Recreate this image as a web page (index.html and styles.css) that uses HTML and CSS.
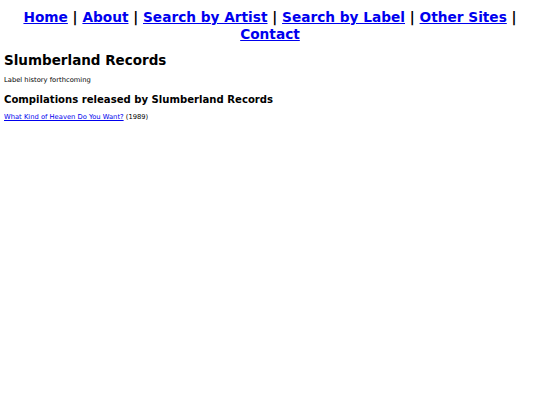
FILE: index.html
```html
<!DOCTYPE html>
<html>
<head>
<meta charset="utf-8">
<link rel="stylesheet" href="styles.css">
<title>Slumberland Records</title>
</head>
<body>
<div class="nav"><a href="#">Home</a> | <a href="#">About</a> | <a href="#">Search by Artist</a> | <a href="#">Search by Label</a> | <a href="#">Other Sites</a> | <a href="#">Contact</a></div>
<h1>Slumberland Records</h1>
<p>Label history forthcoming</p>
<h2>Compilations released by Slumberland Records</h2>
<p><a href="#">What Kind of Heaven Do You Want?</a> (1989)</p>
</body>
</html>
```
FILE: styles.css
```css
body {
  margin: 4px;
  font-family: "DejaVu Sans", Verdana, sans-serif;
  font-size: 6.75px;
  color: #000;
  background: #fff;
}
a { color: #0000ee; }
.nav {
  text-align: center;
  font-weight: bold;
  font-size: 13.7px;
  line-height: 16.5px;
  margin-top: 5px;
}
h1 {
  font-size: 13.5px;
  margin: 10px 0 8px;
}
h2 {
  font-size: 10.1px;
  margin: 10px 0 8px;
}
p { margin: 8px 0; }
```
